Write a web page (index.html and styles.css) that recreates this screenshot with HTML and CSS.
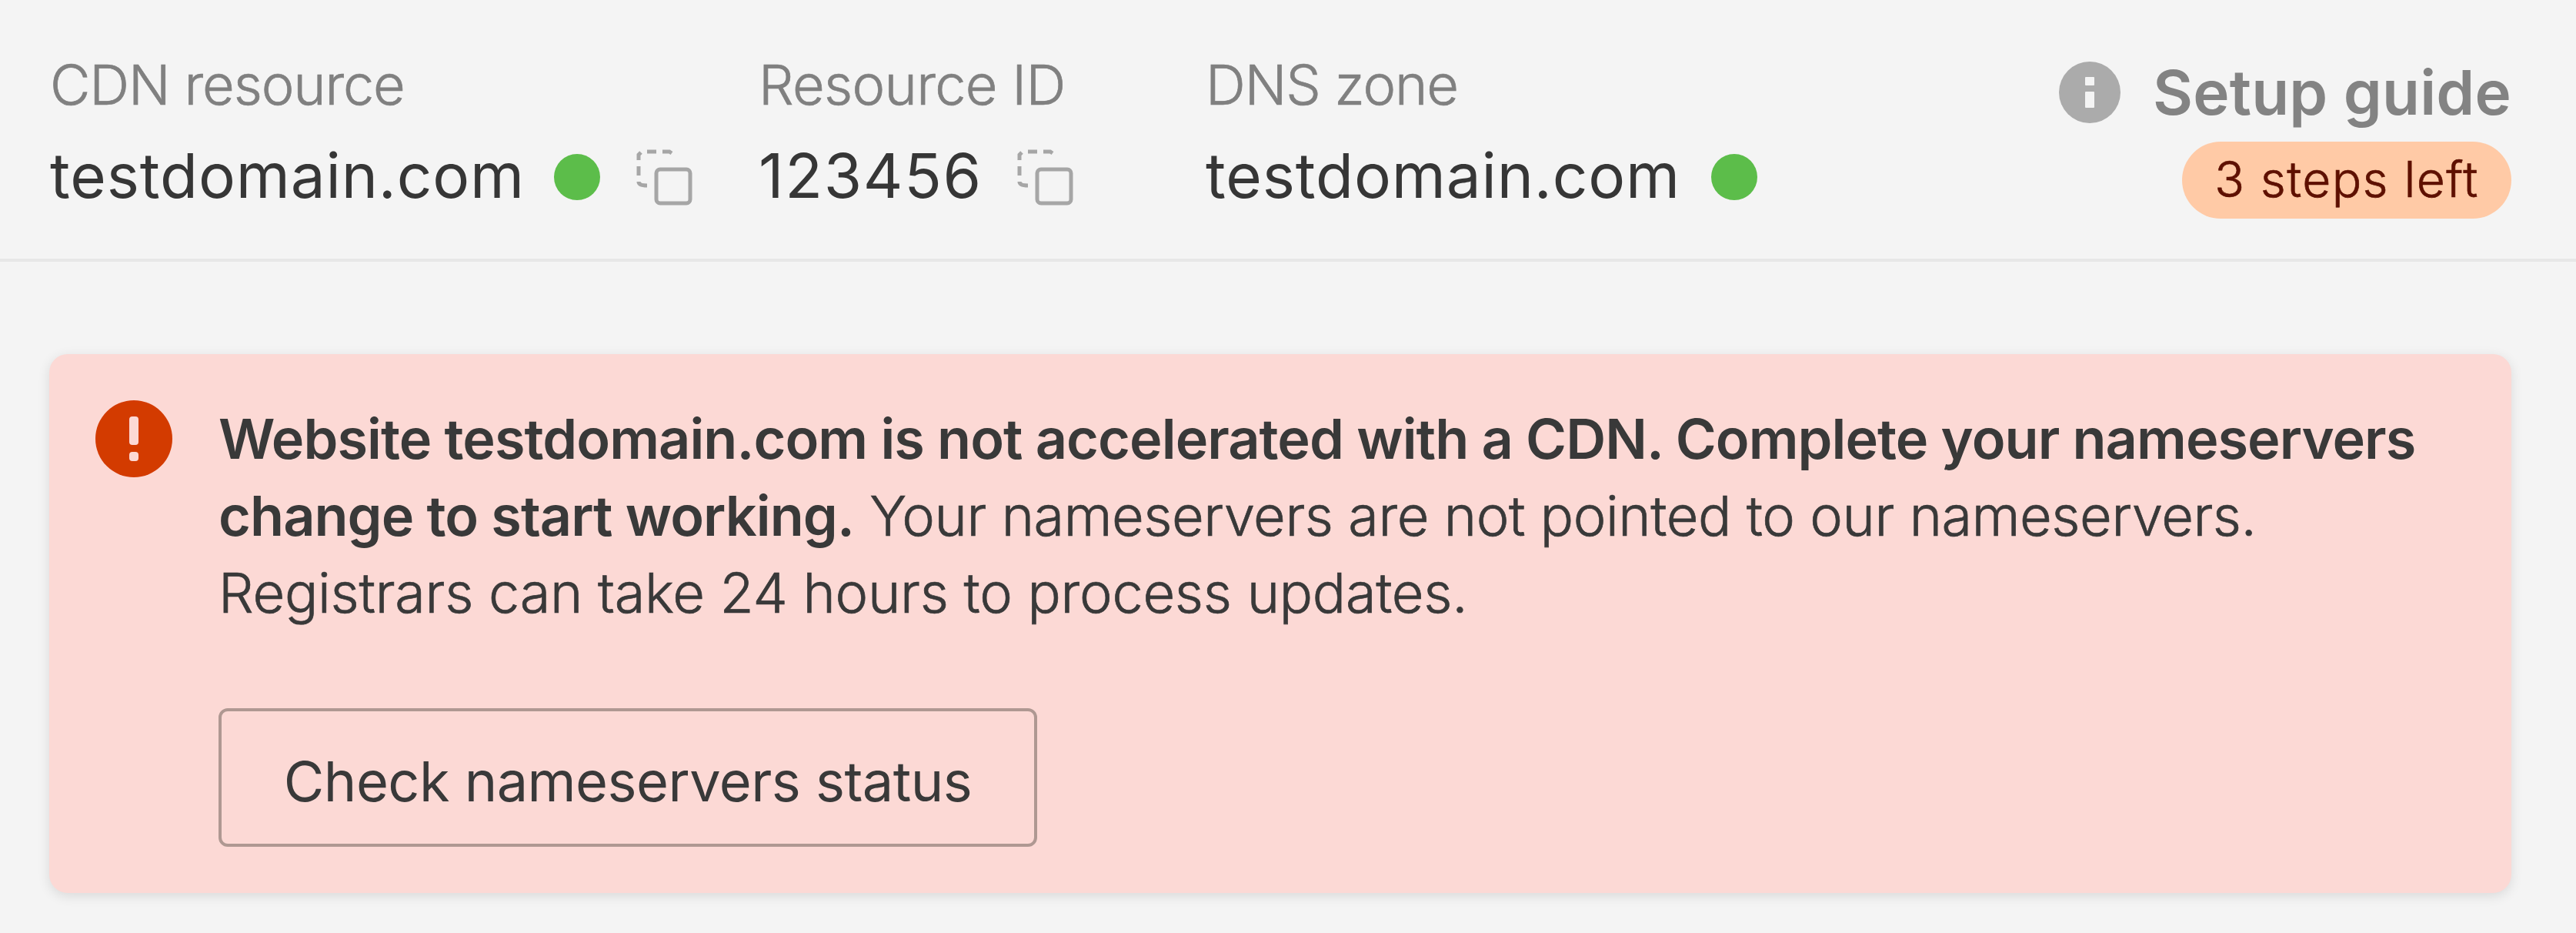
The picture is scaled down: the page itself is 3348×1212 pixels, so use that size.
FILE: index.html
```
<!DOCTYPE html>
<html lang="en">
<head>
<meta charset="utf-8">
<title>CDN resource</title>
<link rel="stylesheet" href="styles.css">
</head>
<body>
<header class="bar">
  <section class="item item-resource">
    <div class="label">CDN resource</div>
    <div class="value"><span class="name">testdomain.com</span><i class="dot"></i>
      <svg class="copy" viewBox="0 0 76 76"><path class="back" d="M5 16V9l3-3M5 24v12M5 44q0 5 11 5M16 5h12M36 5h9l3 2"/><rect class="front" x="28" y="28" width="44" height="44" rx="5"/></svg>
    </div>
  </section>
  <section class="item item-id">
    <div class="label">Resource ID</div>
    <div class="value"><span class="name">123456</span>
      <svg class="copy" viewBox="0 0 76 76"><path class="back" d="M5 16V9l3-3M5 24v12M5 44q0 5 11 5M16 5h12M36 5h9l3 2"/><rect class="front" x="28" y="28" width="44" height="44" rx="5"/></svg>
    </div>
  </section>
  <section class="item item-zone">
    <div class="label">DNS zone</div>
    <div class="value"><span class="name">testdomain.com</span><i class="dot"></i></div>
  </section>
  <section class="guide">
    <div class="guide-title">
      <svg class="info" viewBox="0 0 80 80"><circle cx="40" cy="40" r="40" fill="#ababab"/><rect x="34" y="20" width="12" height="11" rx="1" fill="#f4f4f4"/><rect x="34" y="39" width="12" height="21" rx="1" fill="#f4f4f4"/></svg>
      <span>Setup guide</span>
    </div>
    <div class="pill">3 steps left</div>
  </section>
</header>
<main class="alert">
  <svg class="warn" viewBox="0 0 100 100"><circle cx="50" cy="50" r="50" fill="#d33b00"/><rect x="44" y="21" width="12" height="37" rx="4" fill="#fcd9d5"/><rect x="44" y="67" width="12" height="12" rx="4" fill="#fcd9d5"/></svg>
  <div class="message">
    <p><b>Website testdomain.com is not accelerated with a CDN. Complete your nameservers<br>change to start working.</b> <span class="reason">Your nameservers are not pointed to our nameservers.</span><br><span class="note">Registrars can take 24 hours to process updates.</span></p>
    <button class="check">Check nameservers status</button>
  </div>
</main>
</body>
</html>
```
FILE: styles.css
```
* { box-sizing: border-box; }
body { margin: 0; height: 1212px; background: #f4f4f4; font-family: Inter, sans-serif; color: #363636; overflow: hidden; }
.bar { height: 340px; padding: 71px 84px 0 65px; display: flex; border-bottom: 4px solid #e7e7e7; white-space: nowrap; }
.item-resource { width: 921px; }
.item-id { width: 581px; }
.label { font-size: 72px; font-weight: 300; line-height: 78px; letter-spacing: -1.15px; color: #808080; }
.item-id .label { letter-spacing: -0.7px; }
.label, .pill, .reason, .note { -webkit-text-stroke: 0.7px currentColor; }
.value { display: flex; align-items: center; height: 80px; margin-top: 41px; font-size: 80px; letter-spacing: 0.85px; }
.item-id .value { letter-spacing: 1.7px; }
.name { padding-bottom: 6px; }
.dot { width: 60px; height: 60px; border-radius: 50%; background: #5cbd4a; margin-left: 38px; }
.item-zone .dot { margin-left: 40px; }
.copy { width: 76px; height: 76px; margin-left: 45px; fill: none; }
.item-id .copy { margin-left: 43px; }
.back, .front { stroke: #a6a6a6; stroke-width: 5; }
.guide { margin-left: auto; display: flex; flex-direction: column; align-items: flex-end; }
.guide-title { display: flex; align-items: center; gap: 42px; height: 98px; font-size: 80px; font-weight: 600; letter-spacing: 0.2px; color: #838383; }
.guide-title span { padding-bottom: 2px; }
.info { width: 80px; height: 80px; }
.pill { width: 428px; height: 100px; margin-top: 15px; border-radius: 50px; background: #ffcaa6; color: #5e1000; font-size: 64px; font-weight: 300; letter-spacing: 1.4px; line-height: 98px; text-align: center; }
.alert { display: flex; gap: 60px; margin: 120px 84px 0 64px; height: 700px; padding: 60px; border-radius: 24px; background: #fcd9d5; box-shadow: 0 4px 16px #0000001c; }
.warn { width: 100px; height: 100px; flex: none; }
.message { white-space: nowrap; }
p { margin: 0; font-size: 72px; font-weight: 300; line-height: 100px; color: #393939; }
b { font-weight: 600; letter-spacing: -0.95px; }
.reason { letter-spacing: -0.44px; }
.note { letter-spacing: -0.27px; }
.check { display: block; width: 1064px; height: 180px; margin-top: 100px; padding: 8px 0 0; border: 4px solid #af9892; border-radius: 12px; background: none; font: 72px Inter, sans-serif; letter-spacing: -0.53px; color: #393939; }
```
